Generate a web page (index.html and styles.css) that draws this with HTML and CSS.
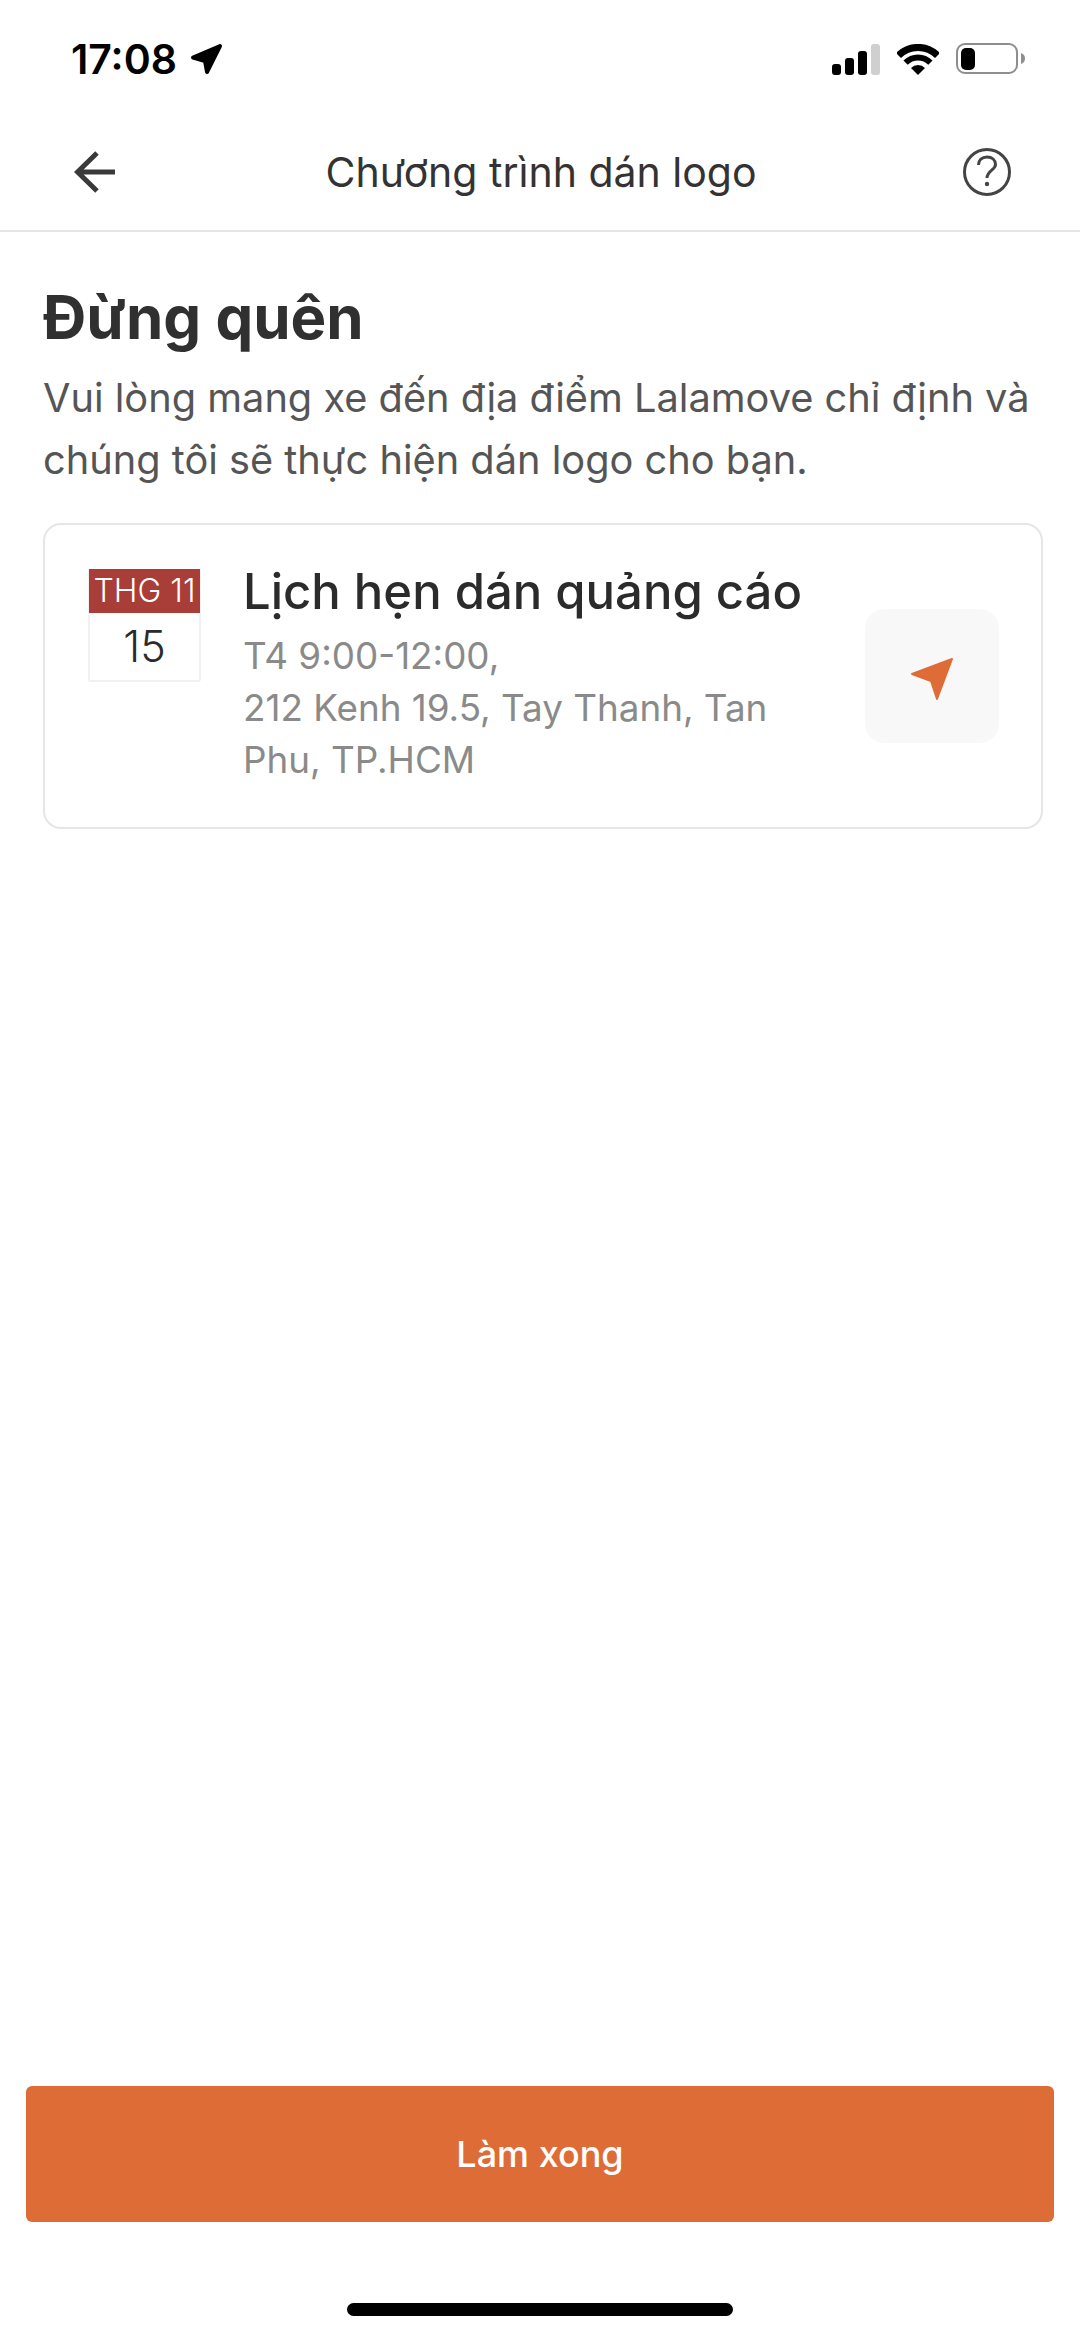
FILE: index.html
```html
<!DOCTYPE html>
<html lang="vi">
<head>
  <meta charset="UTF-8">
  <meta name="viewport" content="width=device-width, initial-scale=1.0">
  <title>Chương trình dán logo</title>
  <link rel="stylesheet" href="styles.css">
</head>
<body>
  <div class="page">
    <div class="status-bar">
      <div class="status-left">
        <span class="time">17:08</span>
        <svg class="loc-icon" width="33" height="32" viewBox="0 0 33 32">
          <path d="M30 3 L3 14.5 L15 18 L17 29 Z" fill="#000" stroke="#000" stroke-width="4" stroke-linejoin="round"/>
        </svg>
      </div>
      <div class="status-right">
        <svg width="48" height="31" viewBox="0 0 48 31">
          <rect x="0" y="20" width="9" height="11" rx="3" fill="#000"/>
          <rect x="13" y="14" width="9" height="17" rx="3" fill="#000"/>
          <rect x="26" y="7" width="9" height="24" rx="3" fill="#000"/>
          <rect x="39" y="0" width="9" height="31" rx="3" fill="#cfcfcf"/>
        </svg>
        <svg width="42" height="31" viewBox="0 0 42 31">
          <path d="M1.5 11.5 A27.5 27.5 0 0 1 40.5 11.5" fill="none" stroke="#000" stroke-width="7"/>
          <path d="M8.6 18.6 A17.5 17.5 0 0 1 33.4 18.6" fill="none" stroke="#000" stroke-width="6"/>
          <path d="M21 31 L14 24 A9.9 9.9 0 0 1 28 24 Z" fill="#000"/>
        </svg>
        <svg width="69" height="32" viewBox="0 0 69 32">
          <rect x="1" y="1" width="60" height="29" rx="8" fill="none" stroke="#8e8e8e" stroke-width="2"/>
          <rect x="5" y="5" width="14" height="22" rx="5" fill="#000"/>
          <path d="M65 10 C68 11 69 13 69 15.5 C69 18 68 20 65 21 Z" fill="#8e8e8e"/>
        </svg>
      </div>
    </div>

    <div class="nav-bar">
      <svg class="back-icon" width="42" height="42" viewBox="0 0 42 42">
        <path d="M41 21 H4 M23 2 L3.5 21 L23 40" fill="none" stroke="#3a3a3a" stroke-width="5"/>
      </svg>
      <div class="nav-title">Chương trình dán logo</div>
      <svg width="48" height="48" viewBox="0 0 48 48">
        <circle cx="24" cy="24" r="22.5" fill="none" stroke="#444" stroke-width="3"/>
        <path d="M15.5 17 C15.5 12 19 9 24 9 C29 9 32.5 12 32.5 16.5 C32.5 22 24 22.5 24 30" fill="none" stroke="#444" stroke-width="3"/>
        <circle cx="24" cy="36" r="2.2" fill="#444"/>
      </svg>
    </div>

    <div class="content">
      <h1>Đừng quên</h1>
      <p class="intro">Vui lòng mang xe đến địa điểm Lalamove chỉ định và chúng tôi sẽ thực hiện dán logo cho bạn.</p>

      <div class="card">
        <div class="calendar">
          <div class="calendar-month">THG 11</div>
          <div class="calendar-day">15</div>
        </div>
        <div class="card-text">
          <div class="card-title">Lịch hẹn dán quảng cáo</div>
          <div class="card-sub">T4 9:00-12:00,<br>212 Kenh 19.5, Tay Thanh, Tan Phu, TP.HCM</div>
        </div>
        <div class="nav-button">
          <svg width="44" height="44" viewBox="0 0 44 44">
            <path d="M42 2 L2 17 L21 24 L27 42 Z" fill="#de6c36" stroke="#de6c36" stroke-width="2" stroke-linejoin="round"/>
          </svg>
        </div>
      </div>
    </div>

    <div class="footer">
      <button class="done-button">Làm xong</button>
      <div class="home-indicator"></div>
    </div>
  </div>
</body>
</html>
```

FILE: styles.css
```css
* {
  box-sizing: border-box;
}
body {
  margin: 0;
  background-color: #fff;
  font-family: Inter, "Noto Sans", sans-serif;
}
.page {
  display: flex;
  flex-direction: column;
  width: 1080px;
  height: 2337px;
}
.status-bar {
  display: flex;
  justify-content: space-between;
  align-items: center;
  height: 118px;
  padding: 0 55px 0 71px;
}
.status-left {
  display: flex;
  align-items: center;
  gap: 13px;
}
.time {
  font-size: 41px;
  font-weight: 600;
  line-height: 48px;
  color: #000;
}
.status-right {
  display: flex;
  align-items: center;
  gap: 17px;
}
.nav-bar {
  display: flex;
  justify-content: space-between;
  align-items: center;
  height: 114px;
  padding: 0 69px 4px 74px;
  border-bottom: 2px solid #e6e6e6;
}
.back-icon {
  margin-right: 3px;
}
.nav-title {
  font-size: 41px;
  font-weight: 400;
  color: #333;
}
.content {
  padding: 48px 37px 0 43px;
}
h1 {
  margin: 0 0 13px;
  font-size: 60px;
  font-weight: 700;
  line-height: 74px;
  color: #303030;
}
.intro {
  margin: 0 0 32px;
  font-size: 39.75px;
  line-height: 62px;
  color: #555;
}
.card {
  display: flex;
  align-items: flex-start;
  height: 306px;
  padding: 44px 42px 0 43px;
  border: 2px solid #e6e6e6;
  border-radius: 18px;
}
.calendar {
  width: 113px;
  height: 113px;
  border: 2px solid #f1f1f1;
  border-top: none;
  border-radius: 0 0 3px 3px;
  text-align: center;
}
.calendar-month {
  height: 44px;
  margin: 0 -1px;
  background-color: #a93d37;
  font-size: 32px;
  font-weight: 300;
  line-height: 44px;
  color: #fff;
  white-space: nowrap;
}
.calendar-day {
  font-size: 43px;
  font-weight: 300;
  line-height: 66px;
  color: #2b2b2b;
}
.card-text {
  width: 570px;
  margin-left: 42px;
}
.card-title {
  margin-top: -7px;
  margin-bottom: 8px;
  font-size: 49px;
  font-weight: 450;
  line-height: 60px;
  color: #2b2b2b;
  white-space: nowrap;
}
.card-sub {
  font-size: 36.8px;
  line-height: 52px;
  color: #8a8a8a;
}
.nav-button {
  display: flex;
  justify-content: center;
  align-items: center;
  width: 134px;
  height: 134px;
  margin-top: 40px;
  margin-left: auto;
  padding-top: 5px;
  background-color: #f8f8f8;
  border-radius: 20px;
}
.footer {
  display: flex;
  flex-direction: column;
  align-items: center;
  margin-top: auto;
  padding-bottom: 21px;
}
.done-button {
  width: 1028px;
  height: 136px;
  margin-bottom: 81px;
  border: none;
  border-radius: 6px;
  background-color: #de6c36;
  font-family: inherit;
  font-size: 36px;
  font-weight: 450;
  color: #fff;
}
.home-indicator {
  width: 386px;
  height: 13px;
  background-color: #000;
  border-radius: 7px;
}
```
